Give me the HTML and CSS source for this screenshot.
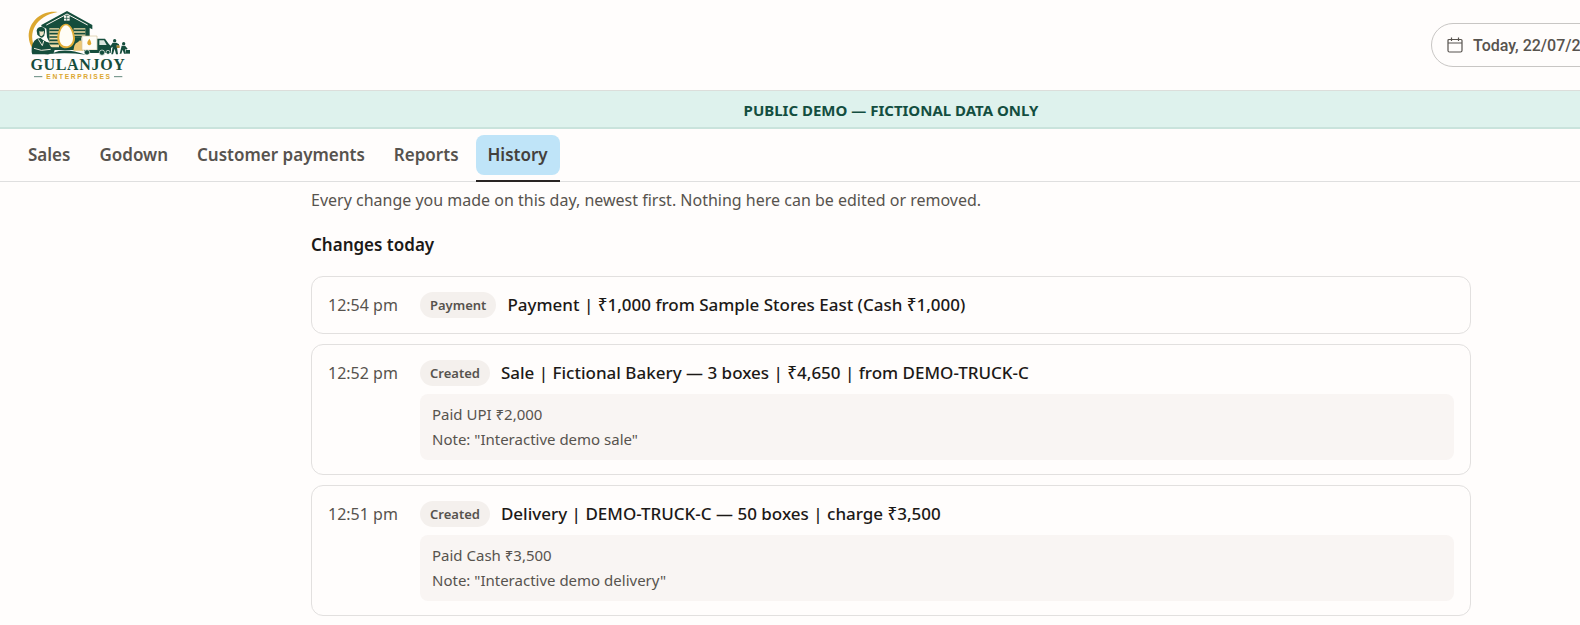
FILE: index.html
```html
<!DOCTYPE html>
<html lang="en">
<head>
<meta charset="utf-8">
<title>Gulanjoy Enterprises – History</title>
<link rel="stylesheet" href="styles.css">
</head>
<body>
<div class="page">
  <header class="topbar">
    <a class="brand" href="#" aria-label="Gulanjoy Enterprises">
      <svg class="logo" viewBox="3 0 390 270" role="img" aria-hidden="true">
        <path d="M128 36 C82 30 42 62 41 108 Q42 132 54 148 L61 144 C36 100 62 48 128 36Z" fill="#dca72f"/>
        <path d="M79 75 L156 33 L232 75 L232 88 L224 84 L224 110 L199 110 L199 150 L90 150 L88 84 L79 88Z" fill="#154d3c"/>
        <path d="M94 75 L156 42 L218 75" fill="none" stroke="#f8f6ef" stroke-width="3"/>
        <path d="M147 47h17v15h-17z" fill="#f8f6ef"/>
        <path d="M155 47v15M147 55h17" stroke="#154d3c" stroke-width="2"/>
        <path d="M103 85h29v57h-29zM176 85h35v27h-35z" fill="#f2dfaa"/>
        <path d="M103 91h29M103 101h29M103 111h29M103 121h29M103 131h29M176 91h35M176 101h35M176 110h35" stroke="#154d3c" stroke-width="5"/>
        <path d="M152 71 C136 71 126 97 127 116 C128 135 139 145 153 145 C168 145 180 133 180 115 C179 94 168 71 152 71Z" fill="#e0ad37"/>
        <path d="M153 76 C141 76 132 99 133 115 C134 130 142 139 153 139 C165 139 174 129 174 114 C173 97 164 76 153 76Z" fill="#fffdf5"/>
        <path d="M178 137 Q182 128 188 127 L195 121 L205 127 L205 152 L175 152Z" fill="#ecc776"/>
        <path d="M201 108h45v42h-45z" fill="#fffdf8" stroke="#d4c49a" stroke-width="2"/>
        <path d="M223 116 q-7 9-6 15 q6 9 12 0 q0-7-6-15" fill="#e0a82f"/>
        <path d="M247 116h23l12 17 6 5v21h-80v-9h39z" fill="#154d3c"/>
        <path d="M253 121h14l8 14h-22z" fill="#d9e5dd"/>
        <g fill="#154d3c" stroke="#fffdf8" stroke-width="2"><circle cx="216" cy="157" r="8"/><circle cx="261" cy="158" r="8"/><circle cx="279" cy="157" r="6"/></g>
        <path d="M60 84 Q76 72 94 86 L96 112 L104 128 L84 124 L62 118Z" fill="#fffdf8"/>
        <path d="M65 92 Q67 79 81 81 Q92 83 90 96 L88 106 Q84 116 76 112 L67 104Z" fill="#154d3c"/>
        <path d="M73 93 Q80 96 87 93 L86 103 Q80 112 74 106Z" fill="#eee3c6"/>
        <path d="M50 157 Q48 125 66 116 L77 114 L84 120 L99 128 Q108 143 119 150 L116 159 L99 163 L52 163Z" fill="#154d3c"/>
        <path d="M70 118 L82 137 L86 123M57 145 L79 151 L107 148" stroke="#e9e6d9" stroke-width="3" fill="none"/>
        <path d="M116 158 Q150 142 213 164 Q147 156 88 164Z" fill="#154d3c"/>
        <g fill="#154d3c"><circle cx="299" cy="122" r="5"/><path d="M293 128h11l8 5v5l-7-2 4 27h-6l-4-17-5 17h-5l4-23-6 5-2-5z"/><path d="M305 136h9v8h-9z" fill="#b08932"/><circle cx="326" cy="131" r="5"/><path d="M320 137h10l8 9-5 3-3-3 3 15h-6l-4-12-4 12h-5z"/><path d="M333 150h12v11h-12z"/></g>
        <text class="logo-name" x="189" y="211" text-anchor="middle">GULANJOY</text>
        <path d="M57 230h25M297 230h25" stroke="#154d3c" stroke-width="2"/>
        <text class="logo-sub" x="192" y="237" text-anchor="middle">ENTERPRISES</text>
      </svg>
    </a>
    <div class="actions">
      <button class="date" type="button">
        <svg class="cal" viewBox="0 0 16 16" aria-hidden="true"><path d="M2 2.500h12q1 0 1 1v10q0 1.500-1.500 1.500h-11q-1.500 0-1.500-1.500v-10q0-1 1-1zM1 6h14M4.500.5v3.500M11.500.5v3.500"/></svg>
        Today, 22/07/2026
      </button>
    </div>
  </header>
  <div class="banner">PUBLIC DEMO — FICTIONAL DATA ONLY</div>
  <nav class="tabs" aria-label="Sections">
    <a class="tab" href="#"><span class="tab-label">Sales</span></a>
    <a class="tab" href="#"><span class="tab-label">Godown</span></a>
    <a class="tab" href="#"><span class="tab-label">Customer payments</span></a>
    <a class="tab" href="#"><span class="tab-label">Reports</span></a>
    <a class="tab tab-active" href="#" aria-current="page"><span class="tab-label">History</span></a>
  </nav>
  <main class="content">
    <p class="intro">Every change you made on this day, newest first. Nothing here can be edited or removed.</p>
    <h2 class="heading">Changes today</h2>
    <ol class="list">
      <li class="card">
        <time class="time">12:54 pm</time>
        <div class="entry">
          <div class="line"><span class="badge">Payment</span><span class="title">Payment | ₹1,000 from Sample Stores East (Cash ₹1,000)</span></div>
        </div>
      </li>
      <li class="card">
        <time class="time">12:52 pm</time>
        <div class="entry">
          <div class="line"><span class="badge">Created</span><span class="title">Sale | Fictional Bakery — 3 boxes | ₹4,650 | from DEMO-TRUCK-C</span></div>
          <div class="detail"><p>Paid UPI ₹2,000</p><p>Note: "Interactive demo sale"</p></div>
        </div>
      </li>
      <li class="card">
        <time class="time">12:51 pm</time>
        <div class="entry">
          <div class="line"><span class="badge">Created</span><span class="title">Delivery | DEMO-TRUCK-C — 50 boxes | charge ₹3,500</span></div>
          <div class="detail"><p>Paid Cash ₹3,500</p><p>Note: "Interactive demo delivery"</p></div>
        </div>
      </li>
    </ol>
  </main>
</div>
</body>
</html>
```
FILE: styles.css
```css
* { box-sizing: border-box; }
body {
  margin: 0;
  overflow: hidden;
  background: #fffdfc;
  color: #1c1917;
  font-family: "Noto Sans", "Liberation Sans", sans-serif;
  font-size: 16px;
}
p, h2, ol { margin: 0; padding: 0; }
.page { width: calc(100% + 202px); }
.topbar {
  display: flex;
  justify-content: space-between;
  align-items: center;
  padding-left: 16px;
  padding-right: 25px;
  border-bottom: 1px solid #dcdedb;
}
.brand, .logo { display: block; }
.logo { width: 130px; height: 90px; }
.logo-name { font: bold 48px "Liberation Serif", serif; fill: #154d3c; letter-spacing: 2px; }
.logo-sub { font: bold 20px "Liberation Sans", sans-serif; fill: #dca72f; letter-spacing: 5px; }
.actions { display: flex; min-width: 326px; }
.date {
  display: flex;
  align-items: center;
  gap: 10px;
  height: 44px;
  padding: 0 15px;
  border: 1px solid #c8c6c4;
  border-radius: 22px;
  background: #fffdfc;
  color: #57534e;
  font: 500 16px Roboto, sans-serif;
}
.cal { width: 16px; height: 16px; fill: none; stroke: #57534e; stroke-width: 1.2; }
.banner {
  padding: 9px 16px 7px;
  border-bottom: 2px solid #c9e3dc;
  background: #def2ed;
  color: #134e40;
  font-size: 15px;
  font-weight: 700;
  line-height: 20px;
  text-align: center;
}
.tabs {
  display: flex;
  gap: 5px;
  padding: 6px 16px 0;
  border-bottom: 1px solid #dfdfdf;
}
.tab {
  padding-bottom: 5px;
  margin-bottom: -1px;
  border-bottom: 2px solid transparent;
  color: #57534e;
  font-size: 17px;
  font-weight: 600;
  text-decoration: none;
}
.tab-label { display: block; padding: 8px 12px; border-radius: 8px; line-height: 24px; }
.tab-active { border-bottom-color: #292524; color: #44403c; }
.tab-active .tab-label { background: #bfe4f8; }
.content { max-width: 1160px; margin: 0 auto; padding: 6px 0; }
.intro { color: #57534e; line-height: 24px; }
.heading { margin: 20px 0 18px; font-size: 17px; font-weight: 600; line-height: 26px; }
.list { display: grid; gap: 10px; list-style: none; }
.card {
  display: flex;
  padding: 14px 16px;
  border: 1px solid #e2e0df;
  border-radius: 12px;
  background: #fffdfc;
}
.time { width: 92px; flex: none; color: #57534e; font-size: 16px; line-height: 28px; }
.entry { flex: 1; }
.line { display: flex; align-items: center; gap: 11px; line-height: 28px; }
.badge {
  padding: 0 10px;
  border-radius: 13px;
  background: #f4f0ed;
  color: #57534e;
  font-size: 13px;
  font-weight: 600;
  line-height: 26px;
}
.title { font-size: 17px; font-weight: 500; }
.detail {
  margin-top: 7px;
  padding: 8px 12px;
  border-radius: 8px;
  background: #f9f5f3;
  color: #57534e;
  font-size: 15px;
  line-height: 25px;
}
```
